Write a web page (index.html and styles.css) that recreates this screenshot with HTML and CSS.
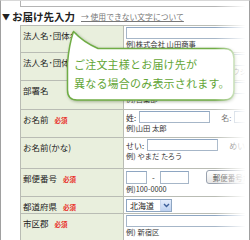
FILE: index.html
```html
<!DOCTYPE html>
<html lang="ja">
<head>
    <meta charset="UTF-8">
    <title>お届け先入力</title>
    <link rel="stylesheet" href="styles.css">
</head>
<body>
    <div class="page">
        <div class="prev-box"></div>

        <h2 class="section-title">
            <span class="arrow">▼</span>お届け先入力
            <a class="note-link" href="#">→ 使用できない文字について</a>
        </h2>

        <table class="form-table">
            <tr class="row-company">
                <th>法人名･団体名</th>
                <td>
                    <input type="text" class="field field-wide">
                    <div class="example">例)株式会社 山田商事</div>
                </td>
            </tr>
            <tr class="row-company-kana">
                <th>法人名･団体名(カナ)</th>
                <td>
                    <input type="text" class="field field-wide">
                    <div class="example">例)カブシキガイシャ ヤマダショウジ</div>
                </td>
            </tr>
            <tr class="row-dept">
                <th>部署名</th>
                <td>
                    <input type="text" class="field field-wide">
                    <div class="example">例)営業部</div>
                </td>
            </tr>
            <tr class="row-name">
                <th>お名前<span class="required">必須</span></th>
                <td>
                    <div class="pair">
                        <span class="pair-label">姓:</span>
                        <input type="text" class="field field-name">
                        <span class="pair-label pair-gap">名:</span>
                        <input type="text" class="field field-name">
                    </div>
                    <div class="example">例)山田 太郎</div>
                </td>
            </tr>
            <tr class="row-kana">
                <th>お名前(かな)</th>
                <td>
                    <div class="pair">
                        <span class="pair-label">せい:</span>
                        <input type="text" class="field field-name">
                        <span class="pair-label pair-gap">めい:</span>
                        <input type="text" class="field field-name">
                    </div>
                    <div class="example">例) やまだ たろう</div>
                </td>
            </tr>
            <tr class="row-zip">
                <th>郵便番号<span class="required">必須</span></th>
                <td>
                    <div class="pair">
                        <input type="text" class="field field-zip3">
                        <span class="dash">-</span>
                        <input type="text" class="field field-zip4">
                        <button type="button" class="zip-button">郵便番号から住所</button>
                    </div>
                    <div class="example">例)100-0000</div>
                </td>
            </tr>
            <tr class="row-pref">
                <th>都道府県<span class="required">必須</span></th>
                <td>
                    <div class="select">
                        <span class="select-text">北海道</span>
                        <span class="select-arrow">
                            <svg width="7" height="5" viewBox="0 0 7 5"><path d="M1 1 L3.5 3.5 L6 1" fill="none" stroke="#3d5f9a" stroke-width="1.4"/></svg>
                        </span>
                    </div>
                </td>
            </tr>
            <tr class="row-city">
                <th>市区郡<span class="required">必須</span></th>
                <td>
                    <input type="text" class="field field-wide">
                    <div class="example">例) 新宿区</div>
                </td>
            </tr>
        </table>

        <div class="bubble">
            <svg class="bubble-shape" width="184" height="80" viewBox="0 0 184 80">
                <path d="M37 19.5 L163 19.5 Q173 19.5 173 29.5 L173 61 Q173 71 163 71 L16 71 Q6.5 71 6.5 61 L6.5 34 Q8 16 12.5 2.5 Q22 13 37 19.5 Z"
                      fill="#fff" stroke="#70ad46" stroke-width="1.5" stroke-linejoin="round"/>
            </svg>
            <p class="bubble-text">ご注文主様とお届け先が<br>異なる場合のみ表示されます。</p>
        </div>

        <div class="fade"></div>
    </div>
</body>
</html>
```

FILE: styles.css
```css
body {
    margin: 0;
    background-color: #fff;
    font-family: "Noto Sans CJK JP", "Liberation Sans", sans-serif;
}

.page {
    position: relative;
    width: 250px;
    height: 240px;
    box-sizing: border-box;
    border: 1px solid #a0a0a0;
    border-top-color: #d8d8d8;
    border-bottom: none;
    overflow: hidden;
}

.prev-box {
    margin-left: 19px;
    height: 5px;
    border: 1px solid #b4b4b4;
    border-top: none;
}

.section-title {
    margin: 0;
    padding-left: 1px;
    height: 18px;
    display: flex;
    align-items: center;
    font-size: 10.5px;
    font-weight: bold;
    color: #222;
    white-space: nowrap;
}

.arrow {
    font-size: 8px;
    margin-right: 2px;
}

.note-link {
    margin-left: 6px;
    font-size: 7.8px;
    font-weight: normal;
    color: #777;
    text-decoration: underline;
}

.form-table {
    margin-left: 19px;
    width: 250px;
    table-layout: fixed;
    border-collapse: collapse;
}

.form-table th,
.form-table td {
    border: 1px solid #b9bcb4;
    vertical-align: top;
    padding: 1px 2px;
}

.form-table th {
    width: 98px;
    background-color: #e9efdd;
    text-align: left;
    font-weight: normal;
    font-size: 8.5px;
    color: #222;
    padding-top: 3px;
    white-space: nowrap;
    overflow: hidden;
}

.form-table td {
    padding-left: 2px;
    overflow: hidden;
}

.row-company { height: 27px; }
.row-company-kana { height: 28px; }
.row-dept { height: 29px; }
.row-name { height: 28px; }
.row-kana { height: 31px; }
.row-zip { height: 28px; }
.row-pref { height: 17px; }
.row-city { height: 30px; }

.required {
    margin-left: 6px;
    font-size: 6.5px;
    font-weight: bold;
    color: #e8302a;
}

.field {
    box-sizing: border-box;
    height: 12px;
    margin: 0;
    padding: 0;
    border: 1px solid #a6b6c8;
    border-top-color: #8ea6c2;
    background-color: #fff;
}

.field-wide {
    display: block;
    width: 140px;
}

.field-name {
    width: 71px;
}

.field-zip3 {
    width: 21px;
    height: 13px;
}

.field-zip4 {
    width: 29px;
    height: 13px;
}

.example {
    margin-top: 1px;
    font-size: 7.3px;
    line-height: 9px;
    color: #333;
    white-space: nowrap;
}

.pair {
    display: flex;
    align-items: center;
    white-space: nowrap;
    font-size: 8px;
    color: #333;
}

.pair-label {
    margin-right: 3px;
}

.pair-gap {
    margin-left: 11px;
}

.dash {
    margin: 0 5px;
}

.zip-button {
    flex-shrink: 0;
    margin-left: 17px;
    height: 14px;
    padding: 0 6px;
    border: 1px solid #9aa3b0;
    border-radius: 3px;
    background: linear-gradient(#ffffff, #e6e6e6);
    font-family: inherit;
    font-size: 7.5px;
    color: #555;
    white-space: nowrap;
}

.select {
    margin-top: 1px;
    width: 46px;
    height: 13px;
    box-sizing: border-box;
    display: flex;
    align-items: center;
    border: 1px solid #8ea6c2;
    font-size: 8px;
    color: #222;
}

.select-text {
    flex: 1;
    padding-left: 3px;
}

.select-arrow {
    width: 10px;
    height: 11px;
    display: flex;
    align-items: center;
    justify-content: center;
    background: linear-gradient(#e3ecfb, #bcd0f0);
    border-left: 1px solid #c8d6ee;
}

.bubble {
    position: absolute;
    left: 60px;
    top: 28px;
    width: 184px;
    height: 80px;
}

.bubble-shape {
    position: absolute;
    left: 0;
    top: 0;
    filter: drop-shadow(1.5px 1.5px 1.5px rgba(70, 100, 50, 0.45));
}

.bubble-text {
    position: relative;
    margin: 0;
    padding: 26px 0 0 13px;
    font-size: 11px;
    line-height: 19px;
    letter-spacing: 0.2px;
    color: #62a535;
    white-space: nowrap;
}

.fade {
    position: absolute;
    top: 0;
    right: 0;
    width: 34px;
    height: 240px;
    background: linear-gradient(to right, rgba(255, 255, 255, 0), #fff 90%);
}
```
